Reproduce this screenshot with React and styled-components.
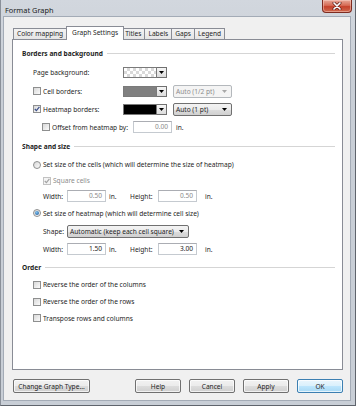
import React from 'react'
import styled, { createGlobalStyle, css } from 'styled-components'

const GlobalStyle = createGlobalStyle`
  html, body { margin: 0; padding: 0; background: #ffffff; }
  body {
    font-family: "Noto Sans", "Open Sans", sans-serif;
    font-size: 6.6px;
    color: #1e1e1e;
  }
  * { box-sizing: border-box; }
`

const Window = styled.div`
  width: 356px;
  height: 406px;
  display: flex;
  flex-direction: column;
  background: linear-gradient(#d2d7de, #c8ced6 80px, #c8ced6);
  border-left: 1px solid #8a9099;
  border-right: 1px solid #5f646c;
  border-bottom: 1px solid #5f646c;
`

const TitleBar = styled.div`
  height: 17px;
  flex: none;
  display: flex;
  justify-content: space-between;
  align-items: flex-start;
  padding-left: 4px;
`

const TitleText = styled.div`
  font-size: 7.4px;
  line-height: 13px;
  padding-top: 3.5px;
  color: #1b1b1b;
`

const CloseButton = styled.div`
  width: 30px;
  height: 13px;
  margin-right: 3px;
  border: 1px solid #7d2b20;
  border-top: none;
  border-radius: 0 0 4px 4px;
  background: linear-gradient(#e7a898, #d66b55 45%, #c5412b 55%, #cf6a4f);
  box-shadow: inset 0 0 0 1px rgba(255, 220, 210, 0.45);
  display: flex;
  align-items: center;
  justify-content: center;
`

const Client = styled.div`
  flex: 1;
  margin: 0 5px 5px 3px;
  background: #f0f0f0;
  box-shadow: 0 0 0 1px #a3abb6;
  display: flex;
  flex-direction: column;
  padding: 9px 7px 7px 8px;
`

const TabStrip = styled.div`
  height: 14px;
  flex: none;
  display: flex;
  align-items: flex-end;
  padding-left: 1px;
  margin-bottom: -1px;
  position: relative;
  z-index: 1;
`

const Tab = styled.div`
  height: ${p => (p.$active ? 14 : 12)}px;
  padding: 0 ${p => (p.$active ? 5 : 3)}px;
  margin: 0 ${p => (p.$active ? -2 : 0)}px 0 -1px;
  border: 1px solid #898c95;
  border-bottom: ${p => (p.$active ? 'none' : '1px solid #898c95')};
  background: ${p => (p.$active ? '#ffffff' : 'linear-gradient(#f3f3f3, #e5e5e5)')};
  position: relative;
  z-index: ${p => (p.$active ? 2 : 1)};
  line-height: ${p => (p.$active ? 11 : 10)}px;
  white-space: nowrap;
  &:first-child { margin-left: 0; }
`

const Panel = styled.div`
  flex: 1;
  background: #ffffff;
  border: 1px solid #898c95;
  padding: 3px 7px 0 9px;
  display: flex;
  flex-direction: column;
`

const GroupHeader = styled.div`
  height: ${p => p.$h || 18}px;
  display: flex;
  align-items: center;
  font-weight: bold;
  white-space: nowrap;
  &::after {
    content: '';
    flex: 1;
    height: 1px;
    margin-left: 4px;
    background: #d5d5d5;
  }
`

const Row = styled.div`
  height: ${p => p.$h || 18}px;
  display: flex;
  align-items: center;
  padding-left: ${p => p.$indent || 11}px;
  white-space: nowrap;
`

const Label = styled.div`
  width: ${p => p.$w}px;
  flex: none;
  display: flex;
  align-items: center;
  color: ${p => (p.$disabled ? '#8c8c8c' : 'inherit')};
`

const Text = styled.span`
  color: ${p => (p.$disabled ? '#8c8c8c' : 'inherit')};
`

const Box = styled.span`
  width: 8px;
  height: 8px;
  flex: none;
  margin-right: 2px;
  border: 1px solid ${p => (p.$disabled ? '#c2c2c2' : '#8e8f8f')};
  background: ${p => (p.$disabled ? '#f4f4f4' : 'linear-gradient(135deg, #d8d8d8, #fbfbfb)')};
  display: flex;
  align-items: center;
  justify-content: center;
`

const RadioDot = styled.span`
  width: 8px;
  height: 8px;
  flex: none;
  margin-right: 2px;
  border-radius: 50%;
  border: 1px solid #8e8f8f;
  background: linear-gradient(135deg, #d8d8d8, #fbfbfb);
  display: flex;
  align-items: center;
  justify-content: center;
  &::after {
    content: '';
    width: 4px;
    height: 4px;
    border-radius: 50%;
    background: ${p => (p.$checked ? 'radial-gradient(circle at 40% 35%, #7cc2f2, #1a4f8e)' : 'transparent')};
  }
`

const checker = css`
  background-color: #ffffff;
  background-image:
    linear-gradient(45deg, #d9d9d9 25%, transparent 25%, transparent 75%, #d9d9d9 75%),
    linear-gradient(45deg, #d9d9d9 25%, transparent 25%, transparent 75%, #d9d9d9 75%);
  background-size: 6px 6px;
  background-position: 0 0, 3px 3px;
`

const Swatch = styled.div`
  width: 34px;
  height: 11px;
  border: 1px solid #7a7a7a;
  ${p => (p.$fill ? `background: ${p.$fill};` : checker)}
`

const SwatchArrow = styled.div`
  width: 10px;
  height: 11px;
  border: 1px solid #707070;
  border-left: none;
  background: linear-gradient(#f6f6f6, #dcdcdc);
  display: flex;
  align-items: center;
  justify-content: center;
`

const Combo = styled.div`
  width: ${p => p.$w}px;
  height: 13px;
  margin-left: ${p => p.$ml || 0}px;
  border: 1px solid ${p => (p.$disabled ? '#b4b8bc' : '#707070')};
  border-radius: 2px;
  background: ${p => (p.$disabled ? '#f4f4f4' : 'linear-gradient(#f3f3f3, #ebebeb 50%, #dddddd 50%, #d0d0d0)')};
  color: ${p => (p.$disabled ? '#8c8c8c' : 'inherit')};
  display: flex;
  align-items: center;
  justify-content: space-between;
  padding: 0 4px 0 2px;
`

const TextBox = styled.div`
  width: 39px;
  height: 12px;
  flex: none;
  border: 1px solid #c5cad0;
  border-top-color: #abadb3;
  background: #ffffff;
  text-align: right;
  line-height: 10px;
  padding-right: 3px;
  color: ${p => (p.$disabled ? '#8c8c8c' : 'inherit')};
`

const Unit = styled.span`
  width: ${p => (p.$w ? `${p.$w}px` : 'auto')};
  flex: none;
  padding-left: ${p => p.$gap || 3}px;
`

const ButtonRow = styled.div`
  height: 14px;
  flex: none;
  margin-top: 9px;
  display: flex;
  gap: 8px;
  padding-left: 1px;
`

const Spacer = styled.div`
  flex: 1;
`

const Button = styled.div`
  width: ${p => p.$w || 46}px;
  height: 14px;
  border: 1px solid ${p => (p.$primary ? '#3c7fb1' : '#707070')};
  border-radius: 2px;
  background: ${p =>
    p.$primary
      ? 'linear-gradient(#eaf6fd, #d9f0fc 50%, #bee6fd 50%, #a7d9f5)'
      : 'linear-gradient(#f2f2f2, #ebebeb 50%, #dddddd 50%, #cfcfcf)'};
  box-shadow: inset 0 0 0 1px rgba(255, 255, 255, 0.7);
  display: flex;
  align-items: center;
  justify-content: center;
  white-space: nowrap;
`

const Arrow = ({ color = '#000' }) => (
  <svg width="5" height="3" viewBox="0 0 5 3">
    <path d="M0 0 L5 0 L2.5 3 Z" fill={color} />
  </svg>
)

function CheckBox({ checked, disabled }) {
  return (
    <Box $disabled={disabled}>
      {checked && (
        <svg width="6" height="6" viewBox="0 0 6 6">
          <path d="M0.8 3 L2.4 4.7 L5.4 0.9" fill="none" stroke={disabled ? '#a3a3a3' : '#3b4f8a'} strokeWidth="1.2" />
        </svg>
      )}
    </Box>
  )
}

function Radio({ checked, children }) {
  return (
    <Row $h={checked ? 18 : 17}>
      <RadioDot $checked={checked} />
      <Text>{children}</Text>
    </Row>
  )
}

function ColorPicker({ fill }) {
  return (
    <>
      <Swatch $fill={fill} />
      <SwatchArrow>
        <Arrow />
      </SwatchArrow>
    </>
  )
}

function SizeRow({ width, height, disabled, h }) {
  return (
    <Row $h={h} $indent={21}>
      <Label $w={24}>Width:</Label>
      <TextBox $disabled={disabled}>{width}</TextBox>
      <Unit $w={24}>in.</Unit>
      <Label $w={28}>Height:</Label>
      <TextBox $disabled={disabled}>{height}</TextBox>
      <Unit $gap={8}>in.</Unit>
    </Row>
  )
}

const tabs = ['Color mapping', 'Graph Settings', 'Titles', 'Labels', 'Gaps', 'Legend']

export default function App() {
  return (
    <>
      <GlobalStyle />
      <Window>
        <TitleBar>
          <TitleText>Format Graph</TitleText>
          <CloseButton>
            <svg width="10" height="8" viewBox="0 0 10 8">
              <path d="M2 1 L8 7 M8 1 L2 7" stroke="#5a1a12" strokeWidth="3" strokeLinecap="round" />
              <path d="M2 1 L8 7 M8 1 L2 7" stroke="#ffffff" strokeWidth="1.7" strokeLinecap="round" />
            </svg>
          </CloseButton>
        </TitleBar>
        <Client>
          <TabStrip>
            {tabs.map(t => (
              <Tab key={t} $active={t === 'Graph Settings'}>{t}</Tab>
            ))}
          </TabStrip>
          <Panel>
            <GroupHeader $h={20}>Borders and background</GroupHeader>
            <Row $h={19}>
              <Label $w={90}>Page background:</Label>
              <ColorPicker />
            </Row>
            <Row>
              <Label $w={90}><CheckBox />Cell borders:</Label>
              <ColorPicker fill="#808080" />
              <Combo $w={59} $ml={6} $disabled>Auto (1/2 pt)<Arrow color="#a8a8a8" /></Combo>
            </Row>
            <Row>
              <Label $w={90}><CheckBox checked />Heatmap borders:</Label>
              <ColorPicker fill="#000000" />
              <Combo $w={59} $ml={6}>Auto (1 pt)<Arrow /></Combo>
            </Row>
            <Row $indent={20}>
              <Label $w={91}><CheckBox />Offset from heatmap by:</Label>
              <TextBox $disabled>0.00</TextBox>
              <Unit $gap={4}>in.</Unit>
            </Row>
            <GroupHeader $h={20}>Shape and size</GroupHeader>
            <Radio>Set size of the cells (which will determine the size of heatmap)</Radio>
            <Row $h={15} $indent={21}>
              <CheckBox checked disabled />
              <Text $disabled>Square cells</Text>
            </Row>
            <SizeRow width="0.50" height="0.50" disabled h={16} />
            <Radio checked>Set size of heatmap (which will determine cell size)</Radio>
            <Row $indent={21}>
              <Label $w={24}>Shape:</Label>
              <Combo $w={122}>Automatic (keep each cell square)<Arrow /></Combo>
            </Row>
            <SizeRow width="1.50" height="3.00" />
            <GroupHeader>Order</GroupHeader>
            <Row $h={17}><CheckBox /><Text>Reverse the order of the columns</Text></Row>
            <Row $h={17}><CheckBox /><Text>Reverse the order of the rows</Text></Row>
            <Row $h={16}><CheckBox /><Text>Transpose rows and columns</Text></Row>
          </Panel>
          <ButtonRow>
            <Button $w={77}>Change Graph Type...</Button>
            <Spacer />
            <Button>Help</Button>
            <Button>Cancel</Button>
            <Button>Apply</Button>
            <Button $primary>OK</Button>
          </ButtonRow>
        </Client>
      </Window>
    </>
  )
}
